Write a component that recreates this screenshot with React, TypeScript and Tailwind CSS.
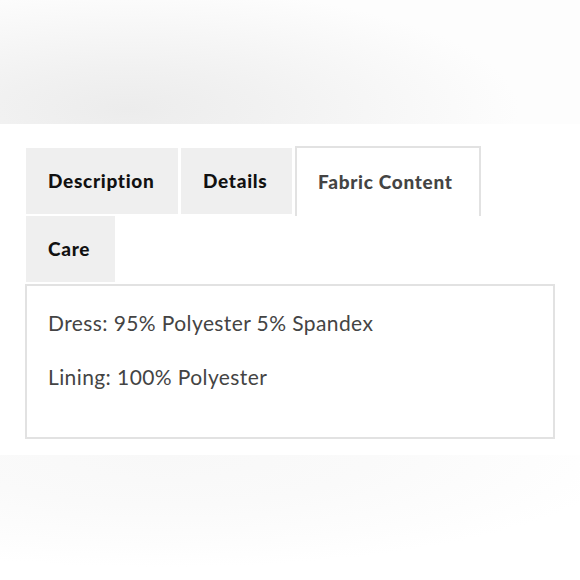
import { useState } from 'react'

const tabs = [
  { id: 'description', label: 'Description', width: 'w-[152px]' },
  { id: 'details', label: 'Details', width: 'w-[111px]' },
  { id: 'fabric', label: 'Fabric Content', width: 'w-[186px]' },
  { id: 'care', label: 'Care', width: 'w-[89px]' },
]

export default function App() {
  const [active, setActive] = useState('fabric')

  return (
    <div className="w-[580px] h-[580px] bg-white overflow-hidden flex flex-col" style={{ fontFamily: 'Lato, "Open Sans", sans-serif' }}>
      {/* blurred page strip above */}
      <div className="h-[124px] shrink-0 bg-[radial-gradient(ellipse_75%_110%_at_22%_88%,#ececec_0%,#f1f1f1_30%,#f7f7f7_60%,#fdfdfd_90%)]" />

      {/* tabs + panel */}
      <div className="pt-[24px] pl-[25px] pr-[25px]">
        <div className="flex flex-wrap pl-[1px]">
          {tabs.map((t) => {
            const isActive = t.id === active
            return (
              <button
                key={t.id}
                onClick={() => setActive(t.id)}
                className={
                  isActive
                    ? `${t.width} h-[70px] mr-[3px] -mt-[2px] pl-[21px] text-left bg-white border-2 border-b-0 border-[#e2e2e2] text-[19px] font-black text-[#444] tracking-[0.7px] relative z-10`
                    : `${t.width} h-[66px] mr-[3px] mb-[2px] pl-[22px] text-left bg-[#efefef] text-[19px] font-black text-[#111] tracking-[0.7px]`
                }
              >
                {t.label}
              </button>
            )
          })}
        </div>
        <div className="w-[530px] h-[155px] border-2 border-[#e2e2e2] pl-[21px] pt-[22px] text-[21px] text-[#444] font-normal tracking-[0.4px]">
          <p className="leading-[30px]">Dress: 95% Polyester 5% Spandex</p>
          <p className="leading-[30px] mt-[24px]">Lining: 100% Polyester</p>
        </div>
      </div>

      {/* blurred page strip below */}
      <div className="mt-[16px] flex-1 bg-[radial-gradient(ellipse_80%_90%_at_28%_0%,#f8f8f8_0%,#fafafa_45%,#fdfdfd_80%,#ffffff_100%)]" />
    </div>
  )
}
